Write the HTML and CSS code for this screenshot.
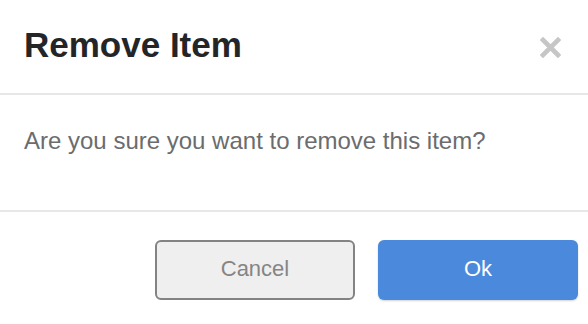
FILE: index.html
```html
<!DOCTYPE html>
<html>
<head>
<meta charset="utf-8">
<link rel="stylesheet" href="styles.css">
</head>
<body>
<div class="modal">
  <div class="modal-header">
    <h1 class="modal-title">Remove Item</h1>
    <button class="close" aria-label="Close">
      <svg width="21" height="21" viewBox="0 0 21 21"><path d="M3 3L18 18M18 3L3 18" stroke="#c6c6c6" stroke-width="4.6" stroke-linecap="square"/></svg>
    </button>
  </div>
  <div class="modal-body">
    <p class="message">Are you sure you want to remove this item?</p>
  </div>
  <div class="modal-footer">
    <button class="btn btn-cancel">Cancel</button>
    <button class="btn btn-ok">Ok</button>
  </div>
</div>
</body>
</html>
```
FILE: styles.css
```css
html, body {
  margin: 0;
  padding: 0;
  background: #ffffff;
}
body {
  font-family: "Liberation Sans", Arial, sans-serif;
  width: 588px;
  height: 324px;
  overflow: hidden;
}
.modal {
  display: flex;
  flex-direction: column;
}
.modal-header {
  height: 95px;
  box-sizing: border-box;
  display: flex;
  align-items: center;
  justify-content: space-between;
  padding: 0 27px 0 24px;
  border-bottom: 2px solid #e6e7e8;
}
.modal-title {
  margin: 0;
  font-size: 35px;
  font-weight: bold;
  color: #232527;
  line-height: 42px;
  padding-bottom: 4px;
}
.close {
  border: 0;
  background: none;
  padding: 0;
  width: 21px;
  height: 21px;
  margin-top: 2px;
  display: block;
}
.close svg { display: block; }
.modal-body {
  height: 117px;
  box-sizing: border-box;
  padding: 28px 24px 0;
  border-bottom: 2px solid #e6e7e8;
}
.message {
  margin: 0;
  font-size: 24px;
  line-height: 36px;
  color: #6a6c6e;
}
.modal-footer {
  display: flex;
  justify-content: flex-end;
  gap: 23px;
  padding: 28px 10px 0 0;
}
.btn {
  width: 200px;
  height: 60px;
  box-sizing: border-box;
  border-radius: 6px;
  font-family: "Liberation Sans", Arial, sans-serif;
  font-size: 22px;
  display: flex;
  align-items: center;
  justify-content: center;
  padding: 0 0 2px;
}
.btn-cancel {
  background: #efefef;
  border: 2px solid #838383;
  color: #858585;
}
.btn-ok {
  background: #4a89dc;
  border: 0;
  color: #ffffff;
  box-shadow: 0 1px 2px rgba(0,0,0,0.18);
}
```
